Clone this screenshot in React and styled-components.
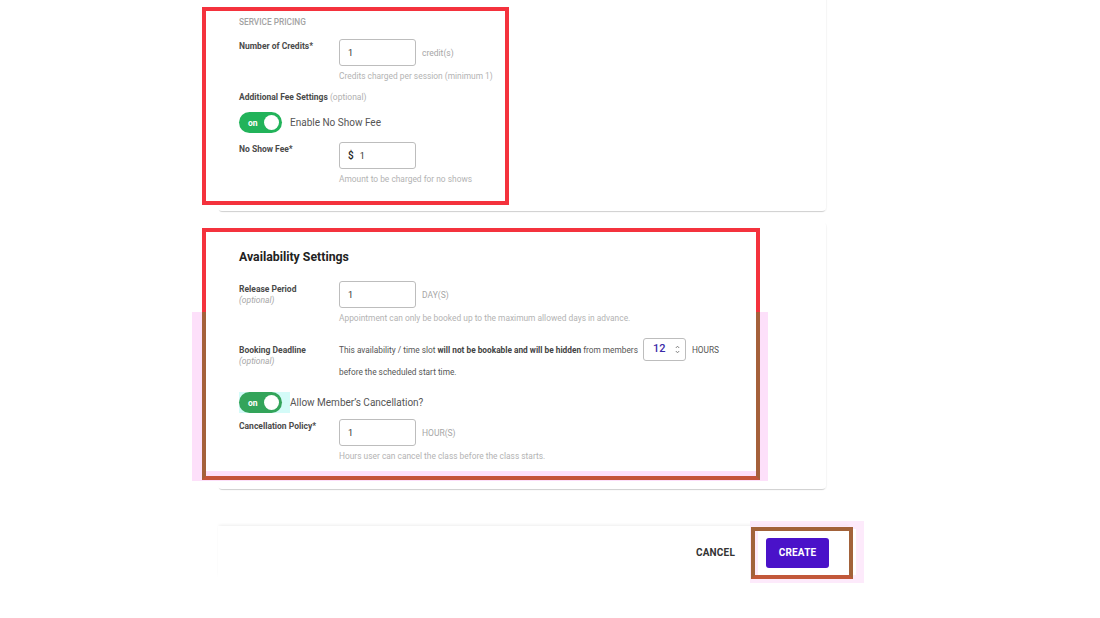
import React from 'react';
import styled, { createGlobalStyle } from 'styled-components';

const GlobalStyle = createGlobalStyle`
  html, body {
    margin: 0;
    padding: 0;
    background: #ffffff;
    font-family: Roboto, "Liberation Sans", Arial, sans-serif;
  }
  * { box-sizing: border-box; }
`;

const Page = styled.div`
  position: relative;
  width: 1100px;
  height: 618px;
  overflow: hidden;
  background: #fff;
`;

const Column = styled.div`
  margin-left: 218px;
  width: 608px;
  display: flex;
  flex-direction: column;
`;

const Card = styled.section`
  background: #fff;
  border-radius: 4px;
  margin-top: ${p => p.$top || 0}px;
  padding: ${p => p.$pad || '25px 21px 25px 21px'};
  box-shadow: 0 2px 1px -1px rgba(0, 0, 0, 0.16), 1px 1px 1px 0 rgba(0, 0, 0, 0.04);
`;

const Overline = styled.div`
  font-size: 8.3px;
  line-height: 14px;
  font-weight: 500;
  color: #a3a3a3;
  text-transform: uppercase;
`;

const Heading = styled.h2`
  margin: 0;
  font-size: 12.3px;
  line-height: 20px;
  font-weight: 700;
  color: #222;
`;

const Row = styled.div`
  display: grid;
  grid-template-columns: 100px 1fr;
  margin-top: ${p => p.$mt || 0}px;
`;

const Label = styled.div`
  padding-top: ${p => p.$pt || 0}px;
  font-size: 8.5px;
  line-height: 14px;
  font-weight: 700;
  color: #4a4a4a;
`;

const Optional = styled.span`
  display: block;
  font-weight: 400;
  font-style: italic;
  color: #a8a8a8;
  line-height: 9px;
`;

const FieldLine = styled.div`
  display: flex;
  align-items: center;
  gap: 6px;
`;

const InputBox = styled.div`
  width: 77px;
  height: 27px;
  border: 1px solid #bdbdbd;
  border-radius: 3px;
  display: flex;
  align-items: center;
  padding-left: 8px;
  gap: 6px;
  font-size: 9px;
  color: #333;
`;

const Prefix = styled.span`
  font-size: 10px;
  font-weight: 500;
  color: #222;
`;

const Unit = styled.span`
  font-size: 8.5px;
  color: #a6a6a6;
`;

const Help = styled.div`
  margin-top: 3px;
  font-size: 8.4px;
  line-height: 14px;
  color: #b3b3b3;
`;

const SubTitle = styled.div`
  margin-top: ${p => p.$mt || 0}px;
  font-size: 8.5px;
  line-height: 14px;
  font-weight: 700;
  color: #4a4a4a;
  span { font-weight: 400; color: #b0b0b0; }
`;

const ToggleRow = styled.div`
  display: flex;
  align-items: center;
  gap: 8px;
  margin-top: ${p => p.$mt || 0}px;
  font-size: 10px;
  color: #555;
`;

const ToggleWrap = styled.div`
  display: flex;
  padding-right: ${p => (p.$hl ? 8 : 0)}px;
  margin-right: ${p => (p.$hl ? -8 : 0)}px;
  background: ${p => (p.$hl ? '#d4fbf8' : 'transparent')};
`;

const Toggle = styled.div`
  width: 43px;
  height: 21px;
  border-radius: 11px;
  background: ${p => p.$dark ? '#33a45a' : '#22b35a'};
  display: flex;
  align-items: center;
  justify-content: space-between;
  padding: 0 3px 0 9px;
  font-size: 8.5px;
  font-weight: 700;
  color: #fff;
  &::after {
    content: '';
    width: 15px;
    height: 15px;
    border-radius: 50%;
    background: #fff;
  }
`;

const Sentence = styled.div`
  font-size: 8.3px;
  line-height: 22px;
  color: #555;
  b { font-weight: 700; color: #444; }
`;

const Spinner = styled.span`
  display: inline-flex;
  vertical-align: middle;
  align-items: center;
  justify-content: space-between;
  width: 43px;
  height: 23px;
  margin: -3px 6px 0 5px;
  padding: 0 5px 0 9px;
  border: 1px solid #bdbdbd;
  border-radius: 3px;
  font-size: 11px;
  font-weight: 500;
  color: #3b2aa8;
`;

const Footer = styled.div`
  margin-top: 37px;
  width: 631px;
  height: 53px;
  display: flex;
  align-items: center;
  justify-content: flex-end;
  gap: 31px;
  padding-right: 20px;
  background: #fff;
  box-shadow: 0 -2px 3px -1px rgba(0, 0, 0, 0.07);
`;

const TextButton = styled.button`
  border: none;
  background: none;
  padding: 0;
  font-family: inherit;
  font-size: 10px;
  font-weight: 700;
  color: #333;
  letter-spacing: 0.2px;
`;

const PrimaryButton = styled.button`
  width: 63px;
  height: 30px;
  border: none;
  border-radius: 3px;
  background: #4a12c9;
  font-family: inherit;
  font-size: 10px;
  font-weight: 700;
  color: #fff;
  letter-spacing: 0.2px;
`;

/* annotation overlays drawn over the screenshot */
const Mark = styled.div`
  position: absolute;
  left: ${p => p.$x}px;
  top: ${p => p.$y}px;
  width: ${p => p.$w}px;
  height: ${p => p.$h}px;
  border: ${p => p.$bw || 4}px solid ${p => p.$c};
  ${p => p.$noTop && 'border-top: none;'}
  ${p => p.$bottom && `border-bottom-color: ${p.$bottom};`}
  background: ${p => p.$fill || 'transparent'};
  pointer-events: none;
`;

const ArrowIcon = () => (
  <svg width="5" height="9" viewBox="0 0 5 9">
    <path d="M0.8 3 L2.5 1.2 L4.2 3" fill="none" stroke="#777" strokeWidth="0.9" />
    <path d="M0.8 6 L2.5 7.8 L4.2 6" fill="none" stroke="#777" strokeWidth="0.9" />
  </svg>
);

export default function App() {
  return (
    <Page>
      <GlobalStyle />
      <Column>
        <Card $top={-10}>
          <Overline>Service Pricing</Overline>
          <Row $mt={10}>
            <Label>Number of Credits*</Label>
            <div>
              <FieldLine>
                <InputBox>1</InputBox>
                <Unit>credit(s)</Unit>
              </FieldLine>
              <Help>Credits charged per session (minimum 1)</Help>
            </div>
          </Row>
          <SubTitle $mt={7}>Additional Fee Settings <span>(optional)</span></SubTitle>
          <ToggleRow $mt={8}>
            <ToggleWrap><Toggle>on</Toggle></ToggleWrap>
            Enable No Show Fee
          </ToggleRow>
          <Row $mt={9}>
            <Label>No Show Fee*</Label>
            <div>
              <FieldLine>
                <InputBox><Prefix>$</Prefix>1</InputBox>
              </FieldLine>
              <Help>Amount to be charged for no shows</Help>
            </div>
          </Row>
        </Card>

        <Card $top={11} $pad="25px 21px 26px 21px">
          <Heading>Availability Settings</Heading>
          <Row $mt={14}>
            <Label $pt={1}>Release Period<Optional>(optional)</Optional></Label>
            <div>
              <FieldLine>
                <InputBox>1</InputBox>
                <Unit>DAY(S)</Unit>
              </FieldLine>
              <Help>Appointment can only be booked up to the maximum allowed days in advance.</Help>
            </div>
          </Row>
          <Row $mt={14}>
            <Label $pt={4}>Booking Deadline<Optional>(optional)</Optional></Label>
            <Sentence>
              This availability / time slot <b>will not be bookable and will be hidden</b> from members
              <Spinner>12<ArrowIcon /></Spinner>HOURS
              <br />
              before the scheduled start time.
            </Sentence>
          </Row>
          <ToggleRow $mt={9}>
            <ToggleWrap $hl><Toggle $dark>on</Toggle></ToggleWrap>
            Allow Member’s Cancellation?
          </ToggleRow>
          <Row $mt={6}>
            <Label>Cancellation Policy*</Label>
            <div>
              <FieldLine>
                <InputBox>1</InputBox>
                <Unit>HOUR(S)</Unit>
              </FieldLine>
              <Help>Hours user can cancel the class before the class starts.</Help>
            </div>
          </Row>
        </Card>

        <Footer>
          <TextButton>CANCEL</TextButton>
          <PrimaryButton>CREATE</PrimaryButton>
        </Footer>
      </Column>

      <Mark $x={202} $y={7} $w={307} $h={198} $c="#f4323d" />
      <Mark $x={192} $y={312} $w={576} $h={169} $bw={10} $c="rgba(252, 214, 248, 0.75)" $noTop />
      <Mark $x={202} $y={228} $w={558} $h={252} $c="#f4323d" />
      <Mark $x={202} $y={312} $w={558} $h={168} $c="#a5603a" $bottom="#c4543a" $noTop />
      <Mark $x={750} $y={521} $w={114} $h={62} $bw={8} $c="rgba(252, 220, 248, 0.6)" />
      <Mark $x={751} $y={527} $w={102} $h={52} $c="#a2623a" $bottom="#c2583a" />
    </Page>
  );
}
